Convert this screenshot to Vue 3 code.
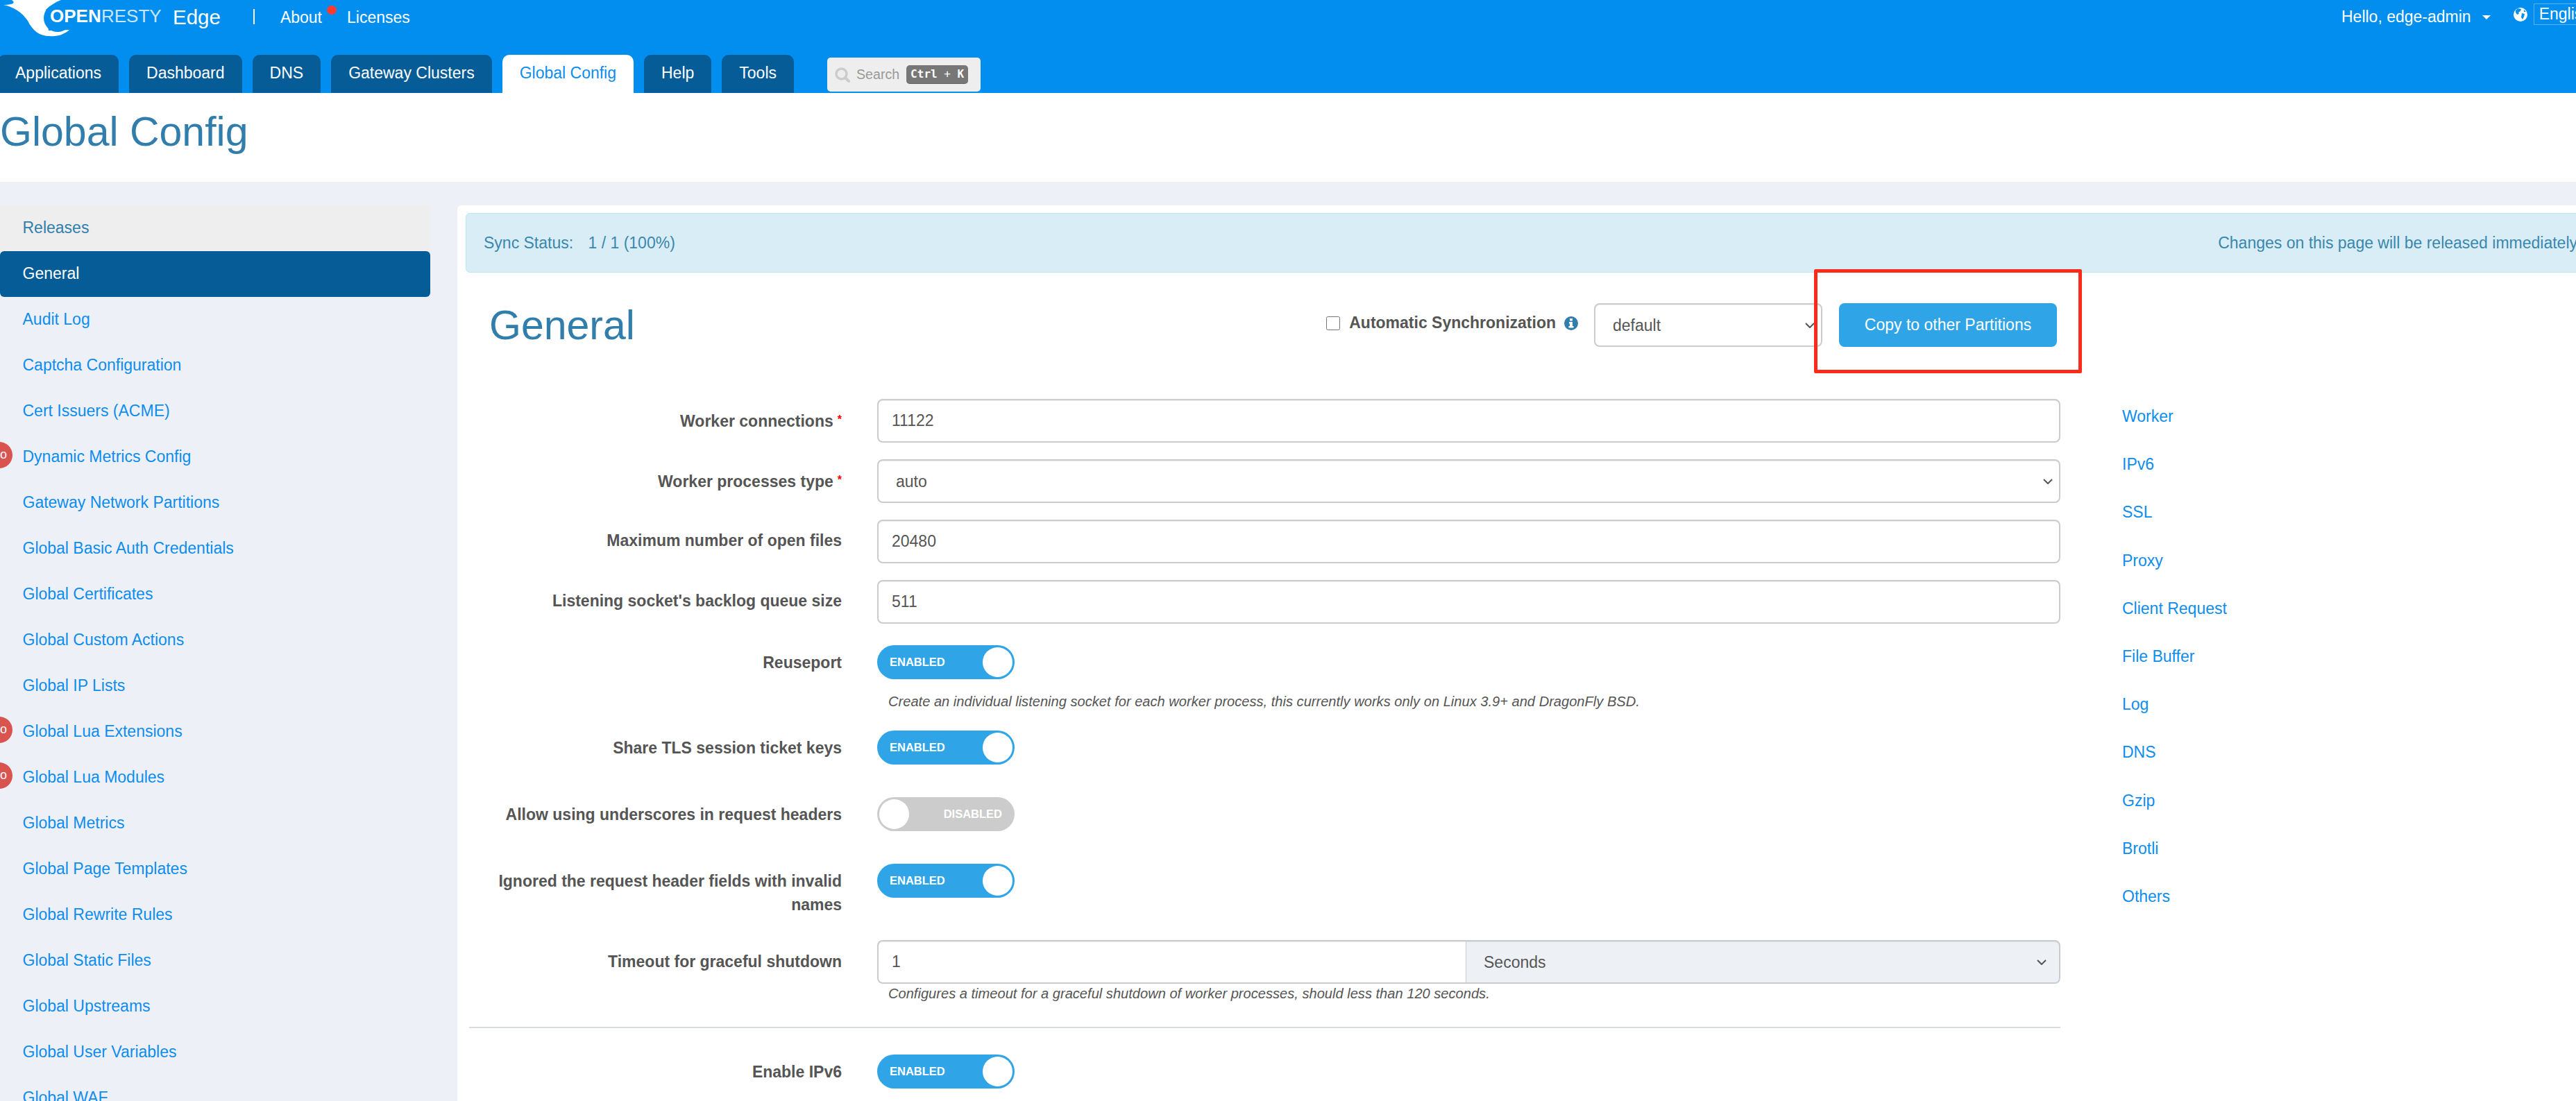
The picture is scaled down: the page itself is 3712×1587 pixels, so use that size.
<template>
    <div class="page">
        <!-- top header -->
        <header class="topbar">
            <div class="top-row">
                <svg class="logo" width="240" height="56" viewBox="0 0 240 56">
                    <path fill="#fff" d="M5 7C16 7 24 5 17 0H88C80 3 72 8 66 14L70 44L100 43C92 50 82 53 72 52C56 52 47 44 40 30C32 18 20 10 5 7Z" />
                    <circle cx="83" cy="26" r="20" fill="#018eef" />
                    <text x="72" y="32" class="logo-open">OPEN</text>
                    <text x="146" y="32" class="logo-resty">RESTY</text>
                </svg>
                <span class="brand">Edge</span>
                <span class="divider"></span>
                <a class="top-link about">About<i class="red-dot"></i></a>
                <a class="top-link licenses">Licenses</a>
                <div class="top-right">
                    <span class="hello">Hello, edge-admin</span>
                    <i class="caret"></i>
                    <svg class="globe" width="20" height="20" viewBox="0 0 20 20">
                        <circle cx="10" cy="10" r="10" fill="#fff" />
                        <path fill="#018eef" d="M6 1L11 2L10 5L7 7L8 9L5 10L3 7L3 4ZM12 8L16 9L15 13L13 17L11 14ZM15 3L18 6L15 6Z" />
                    </svg>
                    <span class="lang">English</span>
                </div>
            </div>
            <nav class="tabs">
                <a v-for="t in tabs" :key="t" class="tab" :class="{ active: t === 'Global Config' }">{{ t }}</a>
                <div class="search">
                    <svg width="22" height="22" viewBox="0 0 22 22" fill="none" stroke="#ccc">
                        <circle cx="9.5" cy="9.5" r="7.5" stroke-width="3.5" />
                        <path d="M15 15L20 20" stroke-width="4" stroke-linecap="round" />
                    </svg>
                    <span class="search-text">Search</span>
                    <kbd><b>Ctrl</b> + <b>K</b></kbd>
                </div>
            </nav>
        </header>

        <div class="title-wrap">
            <h1>Global Config</h1>
        </div>

        <div class="main">
            <aside class="sidebar">
                <a v-for="item in menu" :key="item.name" class="menu-item"
                    :class="{ hover: item.name === 'Releases', active: item.name === 'General' }">
                    <span v-if="item.pro" class="pro">Pro</span>
                    {{ item.name }}
                </a>
            </aside>

            <section class="panel">
                <div class="alert">
                    <span>Sync Status: <span class="sync-value">1 / 1 (100%)</span></span>
                    <span>Changes on this page will be released immediately</span>
                </div>

                <div class="content">
                    <div class="form-col">
                        <div class="form-head">
                            <h2>General</h2>
                            <div class="head-right">
                                <input type="checkbox" class="check">
                                <span class="auto-label">Automatic Synchronization</span>
                                <svg class="info" width="20" height="20" viewBox="0 0 20 20">
                                    <circle cx="10" cy="10" r="10" fill="#317eac" />
                                    <rect x="8" y="3" width="4" height="3.5" fill="#fff" />
                                    <path fill="#fff" d="M7 8H12V14H13.5V16.5H6.5V14H8V10.5H7Z" />
                                </svg>
                                <select class="control partition">
                                    <option>default</option>
                                </select>
                                <button class="copy-btn">Copy to other Partitions</button>
                            </div>
                        </div>

                        <div class="row field">
                            <label>Worker connections<em>*</em></label>
                            <input class="control" value="11122">
                        </div>
                        <div class="row field">
                            <label>Worker processes type<em>*</em></label>
                            <select class="control"><option>auto</option></select>
                        </div>
                        <div class="row field">
                            <label>Maximum number of open files</label>
                            <input class="control" value="20480">
                        </div>
                        <div class="row field">
                            <label>Listening socket's backlog queue size</label>
                            <input class="control" value="511">
                        </div>

                        <div class="row switch-row first-switch">
                            <label>Reuseport</label>
                            <div class="switch on"><span>ENABLED</span><i></i></div>
                        </div>
                        <p class="help reuse-help">Create an individual listening socket for each worker process, this currently works only on Linux 3.9+ and DragonFly BSD.</p>
                        <div class="row switch-row">
                            <label>Share TLS session ticket keys</label>
                            <div class="switch on"><span>ENABLED</span><i></i></div>
                        </div>
                        <div class="row switch-row">
                            <label>Allow using underscores in request headers</label>
                            <div class="switch off"><i></i><span>DISABLED</span></div>
                        </div>
                        <div class="row switch-row tall">
                            <label>Ignored the request header fields with invalid names</label>
                            <div class="switch on"><span>ENABLED</span><i></i></div>
                        </div>
                        <div class="row timeout">
                            <label>Timeout for graceful shutdown</label>
                            <div class="input-group">
                                <input class="control" value="1">
                                <select class="control"><option>Seconds</option></select>
                            </div>
                        </div>
                        <p class="help timeout-help">Configures a timeout for a graceful shutdown of worker processes, should less than 120 seconds.</p>
                        <hr>
                        <div class="row switch-row">
                            <label>Enable IPv6</label>
                            <div class="switch on"><span>ENABLED</span><i></i></div>
                        </div>
                    </div>

                    <div class="side-nav">
                        <a v-for="s in sections" :key="s">{{ s }}</a>
                    </div>
                </div>
            </section>
        </div>

        <!-- red annotation box drawn over the screenshot -->
        <div class="annotation"></div>
    </div>
</template>

<script setup>
const tabs = ['Applications', 'Dashboard', 'DNS', 'Gateway Clusters', 'Global Config', 'Help', 'Tools'];

const menu = [
    { name: 'Releases' },
    { name: 'General' },
    { name: 'Audit Log' },
    { name: 'Captcha Configuration' },
    { name: 'Cert Issuers (ACME)' },
    { name: 'Dynamic Metrics Config', pro: true },
    { name: 'Gateway Network Partitions' },
    { name: 'Global Basic Auth Credentials' },
    { name: 'Global Certificates' },
    { name: 'Global Custom Actions' },
    { name: 'Global IP Lists' },
    { name: 'Global Lua Extensions', pro: true },
    { name: 'Global Lua Modules', pro: true },
    { name: 'Global Metrics' },
    { name: 'Global Page Templates' },
    { name: 'Global Rewrite Rules' },
    { name: 'Global Static Files' },
    { name: 'Global Upstreams' },
    { name: 'Global User Variables' },
    { name: 'Global WAF' }
];

const sections = ['Worker', 'IPv6', 'SSL', 'Proxy', 'Client Request', 'File Buffer', 'Log', 'DNS', 'Gzip', 'Brotli', 'Others'];
</script>

<style>
html, body {
    margin: 0;
    overflow: hidden;
}
</style>

<style scoped>
.page {
    position: relative;
    width: 3712px;
    height: 1587px;
    overflow: hidden;
    background: #edf0f7;
    font-family: "Liberation Sans", Arial, sans-serif;
    font-size: 23px;
    color: #555;
}
.topbar {
    height: 134px;
    background: #018eef;
    color: #fff;
}
.top-row {
    height: 79px;
    display: flex;
    align-items: flex-start;
    position: relative;
}
.logo {
    flex-shrink: 0;
    width: 240px;
    height: 56px;
}
.logo-open {
    font-size: 26px;
    font-weight: 700;
    fill: #fff;
}
.logo-resty {
    font-size: 26px;
    fill: rgba(255, 255, 255, 0.8);
}
.brand {
    font-size: 29.5px;
    margin: 7px 0 0 9px;
    line-height: 36px;
}
.divider {
    width: 2px;
    height: 22px;
    background: #fff;
    margin: 13px 0 0 47px;
}
.top-link {
    line-height: 30px;
    margin-top: 10px;
    position: relative;
}
.about {
    margin-left: 37px;
}
.licenses {
    margin-left: 36px;
}
.red-dot {
    position: absolute;
    left: 67px;
    top: -2px;
    width: 14px;
    height: 13px;
    border-radius: 50%;
    background: #ff3b30;
}
.top-right {
    margin-left: auto;
    display: flex;
    align-items: flex-start;
    width: 338px;
    flex-shrink: 0;
    white-space: nowrap;
    overflow: hidden;
}
.hello {
    line-height: 30px;
    margin-top: 9px;
}
.caret {
    width: 0;
    height: 0;
    border: 6px solid transparent;
    border-top: 6px solid #fff;
    border-bottom: 0;
    margin: 22px 0 0 16px;
}
.globe {
    margin: 11px 0 0 33px;
    flex-shrink: 0;
}
.lang {
    margin: 5px 0 0 9px;
    border: 1px solid rgba(255, 255, 255, 0.35);
    padding: 0 7px;
    line-height: 29px;
}
.tabs {
    height: 55px;
    display: flex;
    gap: 15px;
    margin-left: -3px;
}
.tab {
    padding: 11px 25px 0;
    line-height: 30px;
    background: #065c96;
    border-radius: 10px 10px 0 0;
    white-space: nowrap;
}
.tab.active {
    background: #fff;
    color: #0d8ded;
}
.search {
    display: flex;
    align-items: center;
    width: 221px;
    height: 49px;
    box-sizing: border-box;
    margin: 4px 0 0 33px;
    padding: 0 11px;
    background: #eee;
    border-radius: 5px;
    color: #999;
    font-size: 19.6px;
}
.search-text {
    margin-left: 9px;
}
kbd {
    margin-left: 10px;
    padding: 0 6px;
    height: 27px;
    line-height: 26px;
    background: #777;
    border-bottom: 1px solid #666;
    box-sizing: border-box;
    border-radius: 5px;
    color: #fff;
    font-family: "DejaVu Sans Mono", monospace;
    font-size: 16px;
    white-space: nowrap;
}
.title-wrap {
    height: 128px;
    background: #fff;
}
h1 {
    margin: 0;
    padding-top: 23px;
    font-size: 59px;
    font-weight: 400;
    line-height: 66px;
    color: #317eac;
}
.main {
    display: flex;
    margin-top: 34px;
    height: 1291px;
}
.sidebar {
    width: 620px;
    flex-shrink: 0;
}
.menu-item {
    display: block;
    position: relative;
    height: 66px;
    line-height: 65px;
    padding-left: 32.5px;
    color: #0d8ded;
    border-radius: 6px;
}
.menu-item.hover {
    background: #eee;
    color: #317eac;
    border-radius: 0;
}
.menu-item.active {
    background: #065c96;
    color: #fff;
}
.pro {
    position: absolute;
    left: -29px;
    top: 11px;
    width: 47px;
    height: 38px;
    box-sizing: border-box;
    padding-right: 8px;
    line-height: 36px;
    border-radius: 19px;
    background: #d9534f;
    color: #fff;
    font-size: 18px;
    text-align: right;
}
.panel {
    flex: 0 0 3100px;
    margin-left: 39px;
    padding: 11px 12px 0;
    box-sizing: border-box;
    background: #fff;
    border-radius: 6px 0 0 0;
}
.alert {
    height: 86px;
    box-sizing: border-box;
    display: flex;
    justify-content: space-between;
    align-items: center;
    padding: 0 32px 0 25px;
    background: #d9edf7;
    border: 1px solid #bce8f1;
    border-radius: 6px;
    color: #3a87ad;
}
.sync-value {
    margin-left: 15px;
}
.content {
    display: flex;
    align-items: flex-start;
}
.form-col {
    width: 2289px;
    margin-left: 9px;
    flex-shrink: 0;
}
.form-head {
    display: flex;
    align-items: center;
    justify-content: space-between;
    margin: 44px 5px 75px 25px;
    height: 63px;
}
h2 {
    margin: 0;
    font-size: 59px;
    font-weight: 400;
    color: #317eac;
}
.head-right {
    display: flex;
    align-items: center;
}
.check {
    width: 20px;
    height: 20px;
    margin: 0 13px 6px 0;
}
.auto-label {
    font-weight: 700;
    margin-bottom: 6px;
}
.info {
    margin: 0 23px 6px 12px;
}
.control {
    display: block;
    width: 100%;
    height: 63px;
    box-sizing: border-box;
    padding: 0 19px;
    background: #fff;
    border: 2px solid #ccc;
    border-radius: 8px;
    box-shadow: inset 0 1px 1px rgba(0, 0, 0, 0.075);
    color: #555;
    font-family: inherit;
    font-size: 23px;
}
select.control {
    appearance: none;
    padding: 0 40px 0 25px;
    background: #fff url("data:image/svg+xml,%3Csvg xmlns='http://www.w3.org/2000/svg' width='14' height='8'%3E%3Cpath d='M1 1l6 6 6-6' fill='none' stroke='%23555' stroke-width='2'/%3E%3C/svg%3E") no-repeat right 9px center;
}
.partition {
    width: 329px;
}
.copy-btn {
    margin-left: 24px;
    width: 314px;
    height: 63px;
    background: #2fa4e7;
    border: 0;
    border-radius: 8px;
    color: #fff;
    font-family: inherit;
    font-size: 23px;
}
.row {
    display: flex;
    align-items: flex-start;
}
.row label {
    flex: 0 0 533px;
    margin-right: 51px;
    text-align: right;
    font-weight: 700;
    line-height: 34px;
    color: #555;
}
.row label em {
    color: #f00;
    font-style: normal;
    margin-left: 6px;
    font-size: 16px;
    vertical-align: 5px;
}
.field {
    margin-bottom: 24px;
}
.field label {
    padding-top: 13px;
}
.timeout label {
    padding-top: 14px;
}
.switch-row {
    margin-bottom: 47px;
}
.switch-row label {
    padding-top: 8px;
}
.first-switch {
    margin-top: 31px;
    margin-bottom: 0;
}
.tall {
    margin-bottom: 34px;
}
.reuse-help {
    margin: 20px 0 30px 600px;
}
.help {
    font-size: 20.1px;
    font-style: italic;
    line-height: 24px;
    color: #555;
}
.timeout-help {
    margin: 2px 0 0 600px;
}
.switch {
    width: 198px;
    height: 49px;
    box-sizing: border-box;
    border-radius: 25px;
    display: flex;
    align-items: center;
    justify-content: space-between;
    color: #fff;
    font-size: 16.5px;
    font-weight: 700;
}
.switch.on {
    background: #2fa4e7;
    padding: 0 3px 0 18px;
}
.switch.off {
    background: #ccc;
    padding: 0 18px 0 3px;
}
.switch i {
    width: 43px;
    height: 43px;
    border-radius: 50%;
    background: #fff;
}
.input-group {
    display: flex;
    flex: 1;
}
.input-group .control:first-child {
    flex: 0 0 848px;
    width: 848px;
    border-right: 0;
    border-radius: 8px 0 0 8px;
}
.input-group select.control {
    flex: 1;
    width: auto;
    min-width: 0;
    background-color: #edf1f6;
    background-position: right 18px center;
    border-left: 1px solid #ccc;
    border-radius: 0 8px 8px 0;
    padding-left: 25px;
}
hr {
    margin: 36px 0 38px -4px;
    border: 0;
    border-top: 2px solid #d5dcdf;
}
.side-nav {
    margin: 173px 0 0 89px;
    display: flex;
    flex-direction: column;
}
.side-nav a {
    line-height: 69.2px;
    color: #0d8ded;
}
.annotation {
    position: absolute;
    left: 2614px;
    top: 388px;
    width: 386px;
    height: 150px;
    box-sizing: border-box;
    border: 5px solid #ff2a1a;
    border-radius: 2px;
}
</style>
